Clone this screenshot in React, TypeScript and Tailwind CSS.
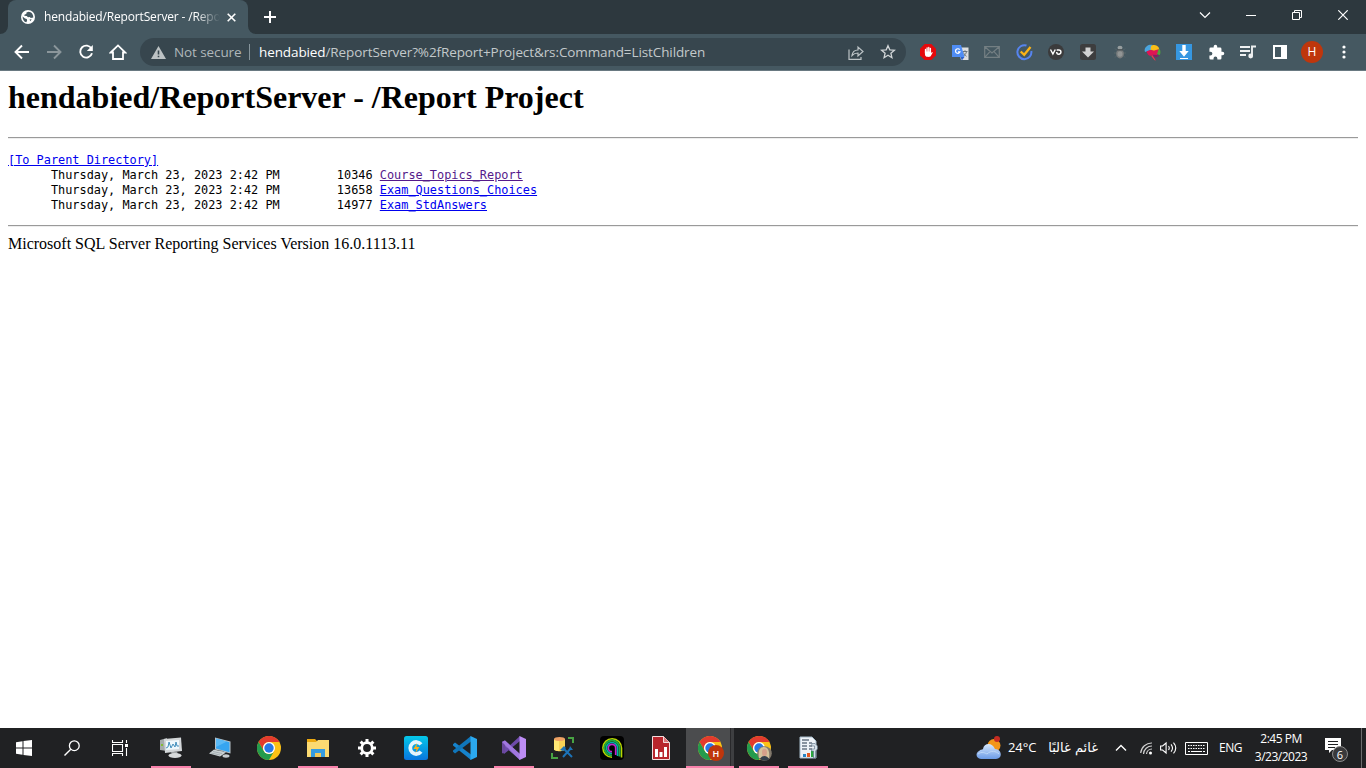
import type { ReactNode } from 'react';

const UI = "font-['Open_Sans','Noto_Sans',sans-serif]";

function Svg({ w, h, vb, children, className = '' }: { w: number; h: number; vb?: string; children: ReactNode; className?: string }) {
  return (
    <svg width={w} height={h} viewBox={vb ?? `0 0 ${w} ${h}`} fill="none" className={`shrink-0 ${className}`}>
      {children}
    </svg>
  );
}

function Cell({ children }: { children: ReactNode }) {
  return <div className="flex h-8 w-8 shrink-0 items-center justify-center">{children}</div>;
}

function WindowCell({ children }: { children: ReactNode }) {
  return <div className="flex h-[29px] w-[46px] shrink-0 items-center justify-center">{children}</div>;
}

function TabStrip() {
  return (
    <div className="flex h-[34px] items-start bg-[#2d383e]">
      <Svg w={8} h={34} className="bg-[#2d383e]">
        <path d="M8 26v8H0a8 8 0 0 0 8-8z" fill="#455861" />
      </Svg>
      <div className="flex h-[34px] w-[240px] items-center rounded-t-lg bg-[#455861] pl-[13px]">
        <Svg w={14} h={14}>
          <circle cx="7" cy="7" r="7" fill="#fff" />
          <path d="M1.6 6.4 4 8.6l1.8.5.3 1.6-.8 1.6C3 11.7 1.5 9.3 1.6 6.4zM7.5 1.7l-2 .8-.2 1.4-1.6.5-.5 1.3 2.5.2 1.3 1.4 1.7-.3 1.1 1.1 2.5-.5C12.5 4.5 10.5 1.700 7.500 1.700zM8.500 9.500l2.200-.2-1.400 2z" fill="#455861" />
        </Svg>
        <div className={`ml-[9px] h-5 w-[176px] overflow-hidden text-[12px] leading-5 tracking-[-0.16px] whitespace-nowrap text-white [mask-image:linear-gradient(to_right,black_86%,transparent)] ${UI}`}>
          hendabied/ReportServer - /Report Project
        </div>
        <Svg w={9} h={9} className="ml-[7px]">
          <path d="m.7.7 7.600 7.600M8.300.7.7 8.300" stroke="#fff" strokeWidth="1.600" />
        </Svg>
      </div>
      <Svg w={8} h={34}>
        <path d="M0 26v8h8a8 8 0 0 1-8-8z" fill="#455861" />
      </Svg>
      <div className="flex h-[34px] w-7 items-center justify-center">
        <Svg w={12} h={12}>
          <path d="M6 0v12M0 6h12" stroke="#fff" strokeWidth="2" />
        </Svg>
      </div>
      <div className="ml-auto flex">
        <WindowCell>
          <Svg w={12} h={8}><path d="m1 1.500 5 5 5-5" stroke="#fff" strokeWidth="1.200" /></Svg>
        </WindowCell>
        <WindowCell>
          <Svg w={10} h={10}><path d="M0 5.500h10" stroke="#fff" /></Svg>
        </WindowCell>
        <WindowCell>
          <Svg w={10} h={10}><path d="M.5 2.500h7v7h-7zM2.500 2.500v-2h7v7h-2" stroke="#fff" /></Svg>
        </WindowCell>
        <WindowCell>
          <Svg w={10} h={10}><path d="m.3.3 9.400 9.400M9.700.3.3 9.700" stroke="#fff" strokeWidth="1.200" /></Svg>
        </WindowCell>
      </div>
    </div>
  );
}

function Extensions() {
  return (
    <>
      <Cell>
        <Svg w={16} h={16}>
          <path d="M4.700 0h6.600L16 4.700v6.600L11.300 16H4.700L0 11.300V4.700z" fill="#e5090c" />
          <path d="M5.500 8.500V5.500M7.100 8V3.800M8.800 8V3.400M10.400 8V4.500" stroke="#fff" strokeWidth="1.300" strokeLinecap="round" />
          <path d="M4.900 7.500h6.200V9l1-1 .7.500-2 3.600c-.9 1.200-4.300 1.200-5.200 0-.7-.8-.7-2-.7-4.600z" fill="#fff" />
        </Svg>
      </Cell>
      <Cell>
        <Svg w={17} h={17}>
          <path d="M6 3.500h10.500V16H9z" fill="#dedfe0" />
          <path d="M10.500 7.500h5M13 6.300v1.200M14.500 7.500c-.5 2.500-1.500 3.800-3.300 4.500M11.500 8.500c.7 1.800 1.500 3 3 3.800" stroke="#69757c" />
          <path d="M0 1h9l3.500 12H0z" fill="#4f8df5" />
          <path d="m8.500 13h4l-2.700 3.500z" fill="#2f62c8" />
          <path d="M7.700 5.700A2.300 2.300 0 1 0 8 7.800H6" stroke="#fff" strokeWidth="1.200" />
        </Svg>
      </Cell>
      <Cell>
        <Svg w={16} h={12}><path d="M.7.7h14.600v10.600H.7zL8 7l7.300-6.300M.7 11.300 6 5.700M15.300 11.300 10 5.700" stroke="#747f83" strokeWidth="1.200" /></Svg>
      </Cell>
      <Cell>
        <Svg w={17} h={17}>
          <path d="M10.500 1.500A7 7 0 1 0 15.300 7" stroke="#5684ef" strokeWidth="2" />
          <path d="m4.700 7.500 3.500 3.300L14.500 3" stroke="#fcb316" strokeWidth="2.300" />
        </Svg>
      </Cell>
      <Cell>
        <Svg w={16} h={16}>
          <circle cx="8" cy="8" r="8" fill="#3b3b3c" />
          <path d="m2.500 5.500 2.400 4.600 2.400-4.600M8.700 6h2c3 0 3 4.200 0 4.200-1.300 0-2-.7-2-2.200" stroke="#fff" strokeWidth="1.400" />
        </Svg>
      </Cell>
      <Cell>
        <Svg w={16} h={16}>
          <rect width="16" height="16" rx="2.500" fill="#3d3d3e" />
          <path d="M5.500 3.500h5v4H14l-6 6-6-6h3.500z" fill="#d2d2d2" />
        </Svg>
      </Cell>
      <Cell>
        <Svg w={12} h={14}>
          <path d="M0 8h12M1 12.500l2-2M11 12.500l-2-2M1 3.500l2 2M11 3.500l-2 2" stroke="#59666b" />
          <ellipse cx="6" cy="2.700" rx="2.500" ry="2" fill="#979e9f" />
          <ellipse cx="6" cy="8.800" rx="3.900" ry="4.700" fill="#777b7c" />
          <path d="M3 4.200h6v1.300H3z" fill="#4a5256" />
          <ellipse cx="6" cy="9" rx="2.500" ry="2.800" fill="#929595" />
        </Svg>
      </Cell>
      <Cell>
        <Svg w={17} h={17}>
          <path d="M8.500 1C5 .2 1 2.300.6 6c0 1 .2 1.500.8 2L7 6z" fill="#4aa5df" />
          <path d="M6.500 5.500 7 2.300C8.500.3 13.500.6 15 4l-.5 3.500-5-.5z" fill="#f9be18" />
          <path d="m13 7 2.500-2.500c1.200 2 1.200 5 .2 6.500L12 10z" fill="#50a53b" />
          <path d="M2.500 7.500c2-.8 3-2 5-1.500 1.500 1 4 .5 7-1-.5 3-1.500 4-1.500 6l-5.500.8C4 12 3.500 9.500 2.500 7.500z" fill="#de1554" />
          <path d="m8.500 10.800 6.500.2c-1 2-2.500 2.700-4.500 2.200z" fill="#861e64" />
          <path d="m8.500 11.300 3.300 5.200-1.200-.2-3.300-4z" fill="#ef344e" />
        </Svg>
      </Cell>
      <Cell>
        <Svg w={16} h={16}>
          <path d="M0 0h16v16H0z" fill="#3697e1" />
          <path d="M6.300 1h3.400v6h3L8 12.700 3.300 7h3zM4 14h8v1H4z" fill="#fff" />
        </Svg>
      </Cell>
      <Cell>
        <Svg w={17} h={17} vb="0 0 24 24">
          <path d="M20.500 11H19V7a2 2 0 0 0-2-2h-4V3.500a2.500 2.500 0 0 0-5 0V5H4a2 2 0 0 0-2 2v3.800h1.500a2.700 2.700 0 0 1 0 5.400H2V20a2 2 0 0 0 2 2h3.800v-1.500a2.700 2.700 0 0 1 5.400 0V22H17a2 2 0 0 0 2-2v-4h1.500a2.500 2.500 0 0 0 0-5z" fill="#fff" />
        </Svg>
      </Cell>
      <Cell>
        <Svg w={16} h={14}>
          <path d="M0 2h10M0 6h10M0 10h6M12 11V1.500h4" stroke="#eef0f1" strokeWidth="1.900" />
          <circle cx="10.700" cy="11" r="2.400" fill="#eef0f1" />
        </Svg>
      </Cell>
      <Cell>
        <Svg w={14} h={14}><path fillRule="evenodd" d="M0 0h14v14H0zM2 2v10h6V2z" fill="#fff" /></Svg>
      </Cell>
      <Cell>
        <div className={`flex h-[22px] w-[22px] items-center justify-center rounded-full bg-[#bf360c] text-[12px] leading-none text-white ${UI}`}>H</div>
      </Cell>
      <Cell>
        <Svg w={4} h={14}>
          <circle cx="2" cy="2" r="1.600" fill="#fff" /><circle cx="2" cy="7" r="1.600" fill="#fff" /><circle cx="2" cy="12" r="1.600" fill="#fff" />
        </Svg>
      </Cell>
    </>
  );
}

function Toolbar() {
  return (
    <div className="flex h-[37px] items-center border-b border-[#697981] bg-[#455861] pl-1.5">
      <Cell><Svg w={16} h={16}><path d="M15 8H2M8 1.500 1.500 8 8 14.500" stroke="#fff" strokeWidth="1.900" /></Svg></Cell>
      <Cell><Svg w={16} h={16}><path d="M1 8h13M8 1.500 14.500 8 8 14.500" stroke="#8b969b" strokeWidth="1.900" /></Svg></Cell>
      <Cell><Svg w={16} h={16}><path d="M13.500 4.700A6 6 0 1 0 14 9.300" stroke="#fff" strokeWidth="1.900" /><path d="M14.800 1v6h-6z" fill="#fff" /></Svg></Cell>
      <Cell><Svg w={18} h={16}><path d="M1.700 8.500 9 1.400l7.300 7.100H14V15H4V8.500z" stroke="#fff" strokeWidth="1.800" /></Svg></Cell>
      <div className={`ml-1.5 flex h-7 w-[766px] shrink-0 items-center rounded-full bg-[#37464e] pl-[11px] whitespace-nowrap ${UI}`}>
        <Svg w={15} h={13}><path fillRule="evenodd" d="M7.500 0 15 13H0zM6.700 4.500v4h1.600v-4zm0 5.200v1.600h1.600V9.700z" fill="#bcc2c4" /></Svg>
        <span className="ml-2 w-[67px] text-[13.500px] leading-5 tracking-[-0.1px] text-[#afb7ba]">Not secure</span>
        <span className="ml-2 h-4 w-px bg-[#87959c]" />
        <span className="ml-[9px] w-[448px] text-[13.500px] leading-5 tracking-[-0.1px] text-[#c3c9cb]"><span className="text-white">hendabied</span>/ReportServer?%2fReport+Project&amp;rs:Command=ListChildren</span>
        <div className="ml-auto flex pr-0.5">
          <Cell><Svg w={16} h={15}><path d="M1 4.500v9.800h12V12M4 10.500c.5-4 2.500-5.500 6-5.500V2l5 4.500-5 4.500V8c-2.700 0-4.400.7-6 2.500z" stroke="#bdc4c7" strokeWidth="1.200" /></Svg></Cell>
          <Cell><Svg w={16} h={16}><path d="m8 1.700 1.800 4.100 4.600.4-3.500 3 1 4.500L8 11.300l-3.900 2.400 1-4.500-3.500-3 4.600-.4z" stroke="#d2d6d8" strokeWidth="1.300" /></Svg></Cell>
        </div>
      </div>
      <div className="ml-1.5 flex"><Extensions /></div>
    </div>
  );
}

const reports = [
  { size: '10346', name: 'Course_Topics_Report', color: 'text-[#551a8b]' },
  { size: '13658', name: 'Exam_Questions_Choices', color: 'text-[#0000ee]' },
  { size: '14977', name: 'Exam_StdAnswers', color: 'text-[#0000ee]' },
];

function Rule() {
  return <hr className="h-[2px] border-0 border-t border-b border-t-[#9a9a9a] border-b-[#eeeeee]" />;
}

function Page() {
  return (
    <main className="min-h-0 flex-1 bg-white px-2 pt-2 font-['Liberation_Serif',serif] text-black">
      <h1 className="h-[37px] text-[32px] leading-[37px] font-bold whitespace-nowrap">hendabied/ReportServer - /Report Project</h1>
      <div className="pt-[21px]"><Rule /></div>
      <pre className="pt-[14px] pb-3 font-['DejaVu_Sans_Mono',monospace] text-[11.880px] leading-[15px]">
        <a className="block text-[#0000ee] underline">[To Parent Directory]</a>
        {reports.map((r) => (
          <div key={r.name}>
            {'      Thursday, March 23, 2023 2:42 PM        ' + r.size + ' '}
            <a className={`${r.color} underline`}>{r.name}</a>
          </div>
        ))}
      </pre>
      <Rule />
      <p className="pt-2 text-[16px] leading-[18px]">Microsoft SQL Server Reporting Services Version 16.0.1113.11</p>
    </main>
  );
}

function Chrome() {
  return (
    <>
      <circle cx="12" cy="12" r="12" fill="#fbc116" />
      <path d="M1.600 6A12 12 0 0 1 22.400 6H12a6 6 0 0 0-5.200 9z" fill="#e33b2e" />
      <path d="M1.600 6A12 12 0 0 0 12 24l5.200-9a6 6 0 0 1-10.400 0z" fill="#249b4d" />
      <circle cx="12" cy="12" r="6" fill="#fff" />
      <circle cx="12" cy="12" r="4.700" fill="#2878e8" />
    </>
  );
}

function Task({ children, open = false }: { children: ReactNode; open?: boolean }) {
  return (
    <div className="flex h-10 w-[49px] shrink-0 flex-col items-center">
      <div className="flex h-[38px] items-center pt-0.5">{children}</div>
      <div className={open ? 'h-0.5 w-10 bg-[#f982ac]' : 'h-0.5 w-10'} />
    </div>
  );
}

function Taskbar() {
  return (
    <footer className={`flex h-10 shrink-0 items-center bg-[#202123] text-white ${UI}`}>
      <div className="flex w-12 justify-center">
        <Svg w={16} h={16}><path d="M0 2.200 6.500 1.300V7.500H0zM7.500 1.100 16 0v7.500H7.500zM0 8.500h6.500v6.200L0 13.800zM7.500 8.500H16V16l-8.500-1.100z" fill="#fff" /></Svg>
      </div>
      <div className="flex w-12 justify-center">
        <Svg w={16} h={16}><circle cx="10.300" cy="5.700" r="4.900" stroke="#fff" strokeWidth="1.300" /><path d="m6.800 9.200-6.300 6.300" stroke="#fff" strokeWidth="1.400" /></Svg>
      </div>
      <div className="mr-[2px] flex w-12 justify-center">
        <Svg w={16} h={16}><path d="M.5 0v2.500h10V0M.5 4.500h10v7H.5zM.5 16v-2.500h10V16M14.500 0v3M14.500 8v8" stroke="#fff" strokeWidth="1.100" /><path d="M13 4h3v3h-3z" fill="#fff" /></Svg>
      </div>
      <Task open>
        <Svg w={24} h={24}>
          <path d="M1 4 8 2v13l-7-1z" fill="#a5aaab" /><path d="M2 8h2v2H2z" fill="#83bd32" />
          <path d="m5 3 17-1.500L23 15 6 17z" fill="#d4d8da" /><path d="m7 5 13-1v9L7 14z" fill="#eff8fc" />
          <path d="m7 12 2-1 1-5 2 6 2-4 2 3 1-5 1 4h2" stroke="#438fbc" />
          <path d="m12 16 6-.5 1 3h-6z" fill="#a1a5a7" /><ellipse cx="16" cy="19.500" rx="6.500" ry="2.600" fill="#d7dadb" />
        </Svg>
      </Task>
      <Task>
        <Svg w={24} h={24}>
          <path d="m7 1.500 15.500 4v12L7 13.500z" fill="#b8c3c9" /><path d="m8 2.500 13.500 3.800v10L8 12.500z" fill="#36a5f1" /><path d="m8 2.500 11 3L8 11z" fill="#5bbaf6" />
          <path d="m12 14 3 1-1 3-4-1z" fill="#8d9599" /><path d="m6 13.500 12 3-6 4L1 17.500z" fill="#cad1d3" /><path d="m3 17 9 2M5 15.500l9 2" stroke="#8d989e" strokeWidth=".6" /><ellipse cx="18" cy="20" rx="3.500" ry="1.700" fill="#c7cccf" />
        </Svg>
      </Task>
      <Task><Svg w={24} h={24}><Chrome /></Svg></Task>
      <Task open>
        <Svg w={24} h={24}>
          <path d="M1 3h8l2 2h12v15H1z" fill="#eda910" /><path d="M1 6h9l2-2h11v17H1z" fill="#fbda72" />
          <path d="M5 21v-8h14v8h-4v-4H9v4z" fill="#369ce0" /><path d="M9 17h6v4H9z" fill="#f4c95a" />
        </Svg>
      </Task>
      <Task>
        <Svg w={20} h={20}>
          <circle cx="10" cy="10" r="5.300" stroke="#fff" strokeWidth="2.800" />
          <path d="M10 1v3M10 16v3M1 10h3M16 10h3M3.600 3.600l2.200 2.200M14.200 14.200l2.200 2.200M16.400 3.600l-2.200 2.200M5.800 14.200l-2.200 2.200" stroke="#fff" strokeWidth="3" />
        </Svg>
      </Task>
      <Task>
        <Svg w={24} h={24}>
          <defs><linearGradient id="cleaner" x1="0" y1="0" x2="0" y2="1"><stop stopColor="#05c8e9" /><stop offset="1" stopColor="#0875df" /></linearGradient></defs>
          <rect width="24" height="24" rx="2.500" fill="url(#cleaner)" />
          <path d="M17 8.300a6 6 0 1 0 0 7.400" stroke="#e4f4fd" strokeWidth="3.800" /><path d="m13 7-3.500 6h3l-1 4 4-6h-3z" fill="#ffad12" />
        </Svg>
      </Task>
      <Task>
        <Svg w={24} h={24}>
          <path d="M0 8.200 2 6.500 18 18.500V24L0 9.500z" fill="#1683cc" /><path d="M0 15.800 2 17.500 18 5.500V0L0 14.500z" fill="#1076ba" />
          <path d="m17.500 0 6.500 3v18l-6.500 3z" fill="#2ba9ef" />
        </Svg>
      </Task>
      <Task open>
        <Svg w={24} h={24}>
          <path d="m0 6 3-1.500L19 19l-1 5L2 10v4l-2 1z" fill="#8660c6" /><path d="m0 15 2 3 5-4L18 5V0L5 12 0 7z" fill="#6e4baa" />
          <path d="M3 16 0 17.500V6L3 4.500z" fill="#6b499e" /><path d="m0 6 3-1.500L18 18v6L3 9z" fill="#a177df" /><path d="m17.500 0 6.500 3v18l-6.500 3z" fill="#bd8df5" />
        </Svg>
      </Task>
      <Task>
        <Svg w={24} h={24}>
          <path d="M3 3v10c0 3 11 3 11 0V3z" fill="#f7d256" /><path d="M3 4v10l5 1V5z" fill="#ffe774" /><ellipse cx="8.500" cy="3" rx="5.500" ry="2" fill="#efa264" />
          <path d="M17 2h5v5M7 22H1v-5" stroke="#48a343" strokeWidth="2" />
          <path d="m12 12 9 9M20 12l-8 9" stroke="#1c73b7" strokeWidth="2" /><path d="m9 14 4-4 2 2-3 3zM19 10l-1 4h4" fill="#1c73b7" />
        </Svg>
      </Task>
      <Task>
        <Svg w={24} h={24}>
          <rect width="24" height="24" rx="4" fill="#000" />
          <path d="M21.500 21.500V12a9.300 9.300 0 1 0-9.500 9.300" stroke="#b8d600" strokeWidth="1.600" />
          <path d="M19.500 20.500V12a7.500 7.500 0 1 0-7.500 7.500" stroke="#20a83e" strokeWidth="2" />
          <path d="M17.500 20v-8a5.500 5.500 0 1 0-5.500 5.500" stroke="#00b1ab" strokeWidth="1.600" />
          <path d="M15.700 19v-7a3.700 3.700 0 1 0-3.700 3.700" stroke="#c226cb" strokeWidth="1.700" />
        </Svg>
      </Task>
      <Task>
        <Svg w={18} h={24}>
          <path d="M.5.5h11l6 6v17H.5z" fill="#b8252c" stroke="#f2dddd" /><path d="M11.500.5v6h6" fill="#db777b" stroke="#f2dddd" />
          <path d="M3 13h3v8H3zM7.500 16h3v5h-3zM12 11h3v10h-3z" fill="#fff" />
        </Svg>
      </Task>
      <div className="flex h-10 w-[49px] flex-col border-l border-[#202123] bg-[#4b4c4e]">
        <div className="flex h-[38px] w-full">
          <div className="flex w-[44px] items-center pt-0.5 pl-[12px]">
            <div className="relative h-6 w-6">
              <Svg w={24} h={24}><Chrome /></Svg>
              <div className="absolute top-[9px] left-[10px] flex h-4 w-4 items-center justify-center rounded-full bg-[#bf360c] text-[9px] leading-none font-semibold">H</div>
            </div>
          </div>
          <div className="w-px bg-[#29292b]" /><div className="w-[3px] bg-[#3e3f41]" />
        </div>
        <div className="h-0.5 w-full bg-[#f982ac]" />
      </div>
      <Task open>
        <Svg w={26} h={26} vb="-1 -1 26 26">
          <Chrome />
          <circle cx="17.500" cy="17.500" r="7.300" fill="#82796c" />
          <path d="M12 22c-1-6 0-11 5-11 4 0 6 5 5 11z" fill="#d4c29c" /><ellipse cx="17.500" cy="16.500" rx="2.500" ry="3.800" fill="#d6a08b" /><path d="M13 23c2-4 7-4 9 0-2 2-7 2-9 0z" fill="#35404b" />
        </Svg>
      </Task>
      <Task open>
        <Svg w={20} h={24} className="ml-0.5">
          <path d="M1 1h12l4 4v17H1z" fill="#eef3f8" stroke="#a5bac9" /><path d="M3 4h7M3 7h5M10 7h3M3 10h5M10 10h3M3 13h5M10 13h3" stroke="#25364b" strokeWidth="1.200" />
          <path d="M4 18h3v3H4z" fill="#2785c7" /><path d="M8 17h3v4H8z" fill="#e35b25" /><path d="M12 15h3v6h-3z" fill="#28a53c" />
          <path d="M13 7.500h3l2.500 2.500v3L16.500 15v7h-2v-7h-2v-2h3v-3h-3z" fill="#d5e0e9" stroke="#596f83" strokeWidth=".6" />
        </Svg>
      </Task>
      <div className="ml-auto flex h-10 w-[391px] shrink-0 items-center">
        <Svg w={26} h={24} className="ml-px">
          <defs><linearGradient id="cloud" x1="0" y1="0" x2="0" y2="1"><stop stopColor="#d8e9fd" /><stop offset="1" stopColor="#6b9be7" /></linearGradient></defs>
          <circle cx="18" cy="9.500" r="6.500" fill="#f39618" />
          <path d="M5 23c-5 0-6-6-2-8 2-2 3-1 4-2 1-6 9-7 12 0 7 0 8 10 1 10z" fill="url(#cloud)" /><path d="M2 18c4-3 7-1 9 0 4-4 9-3 12 0" stroke="#bdd7f8" />
          <circle cx="21" cy="3" r="3" fill="#c52c22" />
        </Svg>
        <span className="ml-[6px] w-[30px] text-[13px] tracking-[-0.1px] whitespace-nowrap">24°C</span>
        <span dir="rtl" lang="ar" className="ml-[8px] w-[52px] font-['DejaVu_Sans',sans-serif] text-[13px] whitespace-nowrap">غائم غالبًا</span>
        <Svg w={12} h={8} className="ml-[17px]"><path d="m1 6.500 5-5 5 5" stroke="#fff" strokeWidth="1.400" /></Svg>
        <Svg w={13} h={13} className="ml-[13px]">
          <path d="M.7 11A11 11 0 0 1 12 1M3.500 12A8.500 8.500 0 0 1 12 4M6.500 12A5.500 5.500 0 0 1 12 7" stroke="#d0d0d0" strokeWidth="1.200" /><circle cx="10.500" cy="11" r="1.500" fill="#fff" />
        </Svg>
        <Svg w={18} h={14} className="ml-[7px]"><path d="M.6 5h2l3.500-3v10L2.600 9h-2zM8.500 5q1.500 2 0 4M11 3.300q3 3.700 0 7.400M13.500 1.600q4.500 5.400 0 10.800" stroke="#fff" strokeWidth="1.100" /></Svg>
        <Svg w={23} h={13} className="ml-[7px]"><path d="M.5.5h22v12H.5z" stroke="#fff" /><path d="M3 3.500h17M3 6.500h17" stroke="#fff" strokeDasharray="1.500 1" /><path d="M3 9.500h2M6 9.500h11M18 9.500h2" stroke="#fff" /></Svg>
        <span className="ml-[11px] w-[24px] text-[12px] tracking-[-0.5px]">ENG</span>
        <div className="ml-[9px] flex w-[58px] flex-col items-center pb-px text-[12px] leading-[18px] tracking-[-0.5px] whitespace-nowrap"><span>2:45 PM</span><span>3/23/2023</span></div>
        <div className="relative mt-1 ml-[15px] h-[26px] w-[26px]">
          <Svg w={18} h={18}><path fillRule="evenodd" d="M0 1h16v12H7l-3 3v-3H0zM3 4v1h10V4zM3 7v1h10V7zM3 10v1h7v-1z" fill="#fff" /></Svg>
          <div className="absolute top-[9px] left-[7px] flex h-4 w-4 items-center justify-center rounded-full border border-[#8b8b8b] bg-[#39393b] text-[11px] leading-none">6</div>
        </div>
        <div className="ml-auto h-10 w-px bg-[#6b6c6d]" />
        <div className="w-1" />
      </div>
    </footer>
  );
}

export default function App() {
  return (
    <div className="flex h-screen w-full flex-col overflow-hidden bg-white">
      <TabStrip />
      <Toolbar />
      <Page />
      <Taskbar />
    </div>
  );
}
